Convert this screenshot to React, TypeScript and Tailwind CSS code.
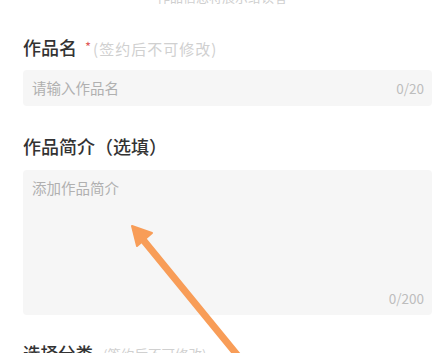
import React from "react";

export default function App() {
  const font = { fontFamily: '"Noto Sans CJK SC", "Noto Sans", sans-serif' };
  return (
    <div className="relative w-[444px] h-[353px] overflow-hidden bg-white" style={font}>
      <div className="h-[8px] overflow-hidden">
        <div className="-mt-[11px] text-center text-[13px] leading-[16px] text-[#cfcfcf]">
          作品信息将展示给读者
        </div>
      </div>
      <div className="pl-[23px] pr-[12px]">
        <div className="mt-[28px] flex items-baseline h-[22px]">
          <span className="text-[18px] leading-[22px] font-medium text-[#333]">作品名</span>
          <span className="ml-[8px] text-[13px] leading-[22px] text-[#e05a5a] relative -top-[3px]">*</span>
          <span className="ml-[2px] text-[15px] leading-[22px] text-[#d0d0d0] tracking-[1px]">(签约后不可修改)</span>
        </div>
        <div className="mt-[12px] h-[36px] rounded-[4px] bg-[#f6f6f6] flex items-center justify-between pl-[9px] pr-[8px]">
          <span className="text-[14.5px] text-[#b0b0b0]">请输入作品名</span>
          <span className="text-[13.5px] text-[#bdbdbd]">0/20</span>
        </div>
        <div className="mt-[29px] h-[22px] flex items-center">
          <span className="text-[18px] leading-[22px] font-medium text-[#333]">作品简介（选填）</span>
        </div>
        <div className="mt-[13px] h-[145px] rounded-[4px] bg-[#f6f6f6] flex flex-col justify-between pl-[9px] pr-[8px] pt-[9px] pb-[8px]">
          <span className="text-[14.5px] leading-[18px] text-[#b0b0b0]">添加作品简介</span>
          <span className="self-end text-[13.5px] leading-[18px] text-[#bdbdbd]">0/200</span>
        </div>
        <div className="mt-[27px] h-[22px] flex items-baseline">
          <span className="text-[17.5px] leading-[22px] font-medium text-[#333]">选择分类</span>
          <span className="ml-[10px] text-[13.5px] leading-[22px] text-[#d0d0d0]">(签约后不可修改)</span>
          <span className="ml-auto mr-[4px] text-[14px] leading-[22px] text-[#999]">›</span>
        </div>
      </div>
      <svg className="absolute inset-0 pointer-events-none" width="444" height="353" viewBox="0 0 444 353">
        <line x1="243" y1="362" x2="140" y2="236" stroke="#f89d58" strokeWidth="7" strokeLinecap="round" />
        <polygon points="132,226 152,233 137,246" fill="#f89d58" stroke="#f89d58" strokeWidth="2" strokeLinejoin="round" />
      </svg>
    </div>
  );
}
